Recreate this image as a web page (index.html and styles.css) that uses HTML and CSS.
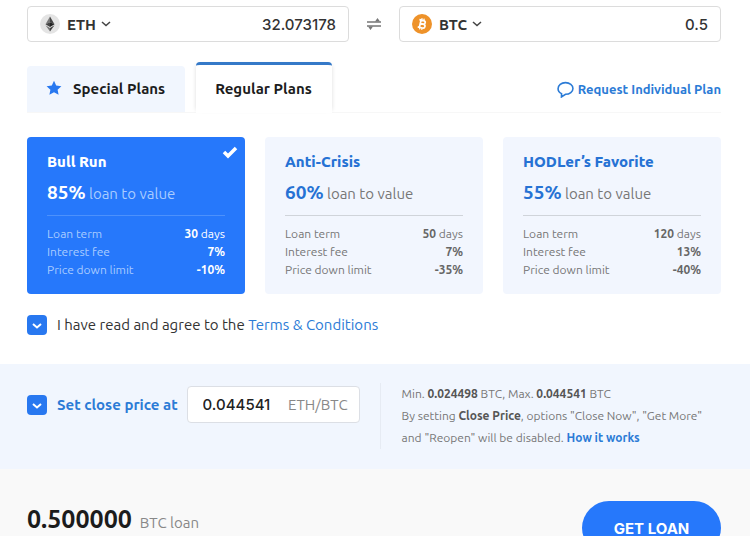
FILE: index.html
```html
<!DOCTYPE html>
<html lang="en">
<head>
    <meta charset="UTF-8">
    <meta name="viewport" content="width=device-width, initial-scale=1">
    <title>Get Loan</title>
    <link rel="stylesheet" href="styles.css">
</head>
<body>
    <form class="loan">
        <div class="amounts">
            <div class="field">
                <svg class="coin" viewBox="0 0 20 20" aria-hidden="true">
                    <circle cx="10" cy="10" r="10" fill="#e4e4e4"/>
                    <path d="M10 2.5 5.5 10.2 10 8.2z" fill="#777"/>
                    <path d="M10 2.5 14.5 10.2 10 8.2z" fill="#444"/>
                    <path d="M5.5 10.2 10 8.2v4.7z" fill="#444"/>
                    <path d="M14.5 10.2 10 8.2v4.7z" fill="#222"/>
                    <path d="M5.5 11.3 10 14v3.6z" fill="#777"/>
                    <path d="M14.5 11.3 10 14v3.6z" fill="#444"/>
                </svg>
                <select class="currency" aria-label="Collateral currency">
                    <option>ETH</option>
                </select>
                <svg class="chevron" viewBox="0 0 10 6" aria-hidden="true"><path d="M1 1l4 3.6L9 1" stroke-width="1.5"/></svg>
                <input class="amount" type="text" value="32.073178" aria-label="Collateral amount">
            </div>
            <svg class="swap" viewBox="0 0 16 12" aria-hidden="true">
                <path d="M1 4h14M1 8h14" fill="none" stroke="#777" stroke-width="1.6"/>
                <path d="M9 3.6 11.500 0 14 3.600zM2 8.400 4.500 12 7 8.400z" fill="#777"/>
            </svg>
            <div class="field">
                <svg class="coin" viewBox="0 0 20 20" aria-hidden="true">
                    <circle cx="10" cy="10" r="10" fill="#ee9229"/>
                    <g transform="rotate(13 10 10)" fill="none" stroke="#fff" stroke-width="1.7">
                        <path d="M6.5 6.3h4.3c2.7 0 2.7 3.6 0 3.6H8h3.2c3 0 3 3.9 0 3.9H6.5M8.2 6.3v7.5"/>
                        <path d="M8.8 4.3v2M11 4.3v2M8.8 13.8v2M11 13.8v2" stroke-width="1.2"/>
                    </g>
                </svg>
                <select class="currency" aria-label="Loan currency">
                    <option>BTC</option>
                </select>
                <svg class="chevron" viewBox="0 0 10 6" aria-hidden="true"><path d="M1 1l4 3.6L9 1" stroke-width="1.5"/></svg>
                <input class="amount" type="text" value="0.5" aria-label="Loan amount">
            </div>
        </div>

        <div class="tabs">
            <button class="tab" type="button">
                <svg class="star" viewBox="0 0 16 16" aria-hidden="true"><path d="m8 .8 2.2 4.7 5.2.7-3.8 3.5 1 5.1L8 12.3l-4.6 2.5 1-5.1L.6 6.2l5.2-.7z"/></svg>
                Special Plans
            </button>
            <button class="tab active" type="button">Regular Plans</button>
            <a class="request" href="#">
                <svg class="bubble" viewBox="0 0 16 16" aria-hidden="true"><path d="M4.300 11.900C2.300 11 1 9.300 1 7.300 1 4 4 1.500 8 1.500s7 2.500 7 5.500-3 5.500-7 5.500L4.200 15z" stroke-width="1.5"/></svg>
                Request Individual Plan
            </a>
        </div>

        <div class="plans">
            <label class="plan">
                <input class="plan-radio" type="radio" name="plan" checked>
                <svg class="tick" viewBox="0 0 16 14" aria-hidden="true"><path d="m2 7 4 4 8-8" stroke-width="3.5"/></svg>
                <span class="plan-name">Bull Run</span>
                <span class="ltv"><b>85%</b> loan to value</span>
                <span class="row">Loan term <span class="value"><b>30</b> days</span></span>
                <span class="row">Interest fee <b class="value">7%</b></span>
                <span class="row">Price down limit <b class="value">-10%</b></span>
            </label>
            <label class="plan">
                <input class="plan-radio" type="radio" name="plan">
                <span class="plan-name">Anti-Crisis</span>
                <span class="ltv"><b>60%</b> loan to value</span>
                <span class="row">Loan term <span class="value"><b>50</b> days</span></span>
                <span class="row">Interest fee <b class="value">7%</b></span>
                <span class="row">Price down limit <b class="value">-35%</b></span>
            </label>
            <label class="plan">
                <input class="plan-radio" type="radio" name="plan">
                <span class="plan-name">HODLer’s Favorite</span>
                <span class="ltv"><b>55%</b> loan to value</span>
                <span class="row">Loan term <span class="value"><b>120</b> days</span></span>
                <span class="row">Interest fee <b class="value">13%</b></span>
                <span class="row">Price down limit <b class="value">-40%</b></span>
            </label>
        </div>

        <div class="terms">
            <span class="check">
                <input type="checkbox" id="agree" checked>
                <svg viewBox="0 0 20 20" aria-hidden="true"><path d="m6 9 4 3.500L14 9"/></svg>
            </span>
            <span><label for="agree">I have read and agree to the</label> <a href="#">Terms &amp; Conditions</a></span>
        </div>

        <div class="close-price">
            <div class="close-set">
                <span class="check">
                    <input type="checkbox" id="close" checked>
                    <svg viewBox="0 0 20 20" aria-hidden="true"><path d="m6 9 4 3.500L14 9"/></svg>
                </span>
                <label class="close-label" for="close">Set close price at</label>
                <div class="price">
                    <input class="price-input" type="text" id="price" value="0.044541" aria-label="Close price">
                    <label for="price">ETH/BTC</label>
                </div>
            </div>
            <div class="hint">
                Min. <b>0.024498</b> BTC, Max. <b>0.044541</b> BTC<br>
                By setting <b>Close Price</b>, options "Close Now", "Get More"<br>
                and "Reopen" will be disabled. <a href="#">How it works</a>
            </div>
        </div>

        <div class="footer">
            <div class="total"><b>0.500000</b>BTC loan</div>
            <button class="submit" type="submit">GET LOAN</button>
        </div>
    </form>
</body>
</html>
```
FILE: styles.css
```css
* {
    box-sizing: border-box;
}
body {
    margin: 0;
    background-color: #fff;
    color: #333;
    font-family: Ubuntu, "Noto Sans", sans-serif;
    font-size: 15px;
}
input, select, button {
    font-family: inherit;
    color: inherit;
    padding: 0;
    border: none;
    background: none;
}
a {
    color: #2b7bd6;
    text-decoration: none;
}
.amounts {
    display: flex;
    align-items: center;
    padding: 6px 29px 0 27px;
}
.field {
    display: flex;
    align-items: center;
    flex: 1;
    min-width: 0;
    height: 36px;
    padding: 0 12px;
    border: 1px solid #dcdcdc;
    border-radius: 4px;
}
.coin {
    width: 20px;
    height: 20px;
    margin-right: 7px;
}
.currency {
    appearance: none;
    font-size: 15px;
    font-weight: 600;
}
.chevron {
    width: 10px;
    height: 6px;
    margin-left: 5px;
    fill: none;
    stroke: #444;
}
.amount {
    flex: 1;
    min-width: 0;
    font-family: Inter, sans-serif;
    font-size: 15px;
    font-weight: 500;
    text-align: right;
}
.swap {
    flex: none;
    width: 16px;
    height: 12px;
    margin: 0 17px;
}
.tabs {
    display: flex;
    align-items: flex-end;
    margin: 20px 29px 0 27px;
    border-bottom: 1px solid #f7f7f7;
}
.tab {
    display: flex;
    align-items: center;
    height: 46px;
    margin-right: 11px;
    padding: 0 20px 2px 19px;
    border-radius: 4px 4px 0 0;
    background-color: #f1f6fe;
    color: #1c1c1c;
    font-size: 15px;
    font-weight: 700;
}
.tab.active {
    height: 51px;
    margin-bottom: -1px;
    border-top: 3px solid #3579c8;
    background-color: #fff;
    box-shadow: 3px 0 4px -3px #ddd, -3px 0 4px -3px #ddd;
}
.star {
    width: 16px;
    height: 16px;
    margin-right: 11px;
    fill: #2878f0;
}
.request {
    display: flex;
    align-items: center;
    height: 46px;
    margin-left: auto;
    font-size: 13px;
    font-weight: 600;
}
.bubble {
    width: 17px;
    height: 17px;
    margin-right: 4px;
    fill: none;
    stroke: #2b7bd6;
}
.plans {
    display: grid;
    grid-template-columns: repeat(3, 1fr);
    gap: 20px;
    padding: 24px 29px 0 27px;
}
.plan {
    position: relative;
    padding: 14px 20px 15px;
    border-radius: 4px;
    background-color: #f2f6fe;
    color: #777;
    cursor: pointer;
}
.plan-radio {
    appearance: none;
    position: absolute;
    margin: 0;
}
.plan-name {
    display: block;
    color: #2672d4;
    font-size: 15px;
    font-weight: 800;
    line-height: 22px;
}
.ltv {
    display: block;
    margin: 6px 0 9px;
    padding-bottom: 8px;
    border-bottom: 1px solid #d0d4da;
    font-size: 15px;
    line-height: 26px;
}
.ltv b {
    color: #2672d4;
    font-size: 19px;
}
.row {
    display: flex;
    justify-content: space-between;
    font-size: 12px;
    line-height: 18px;
}
.value b, b.value {
    color: #666;
}
.plan:has(:checked) {
    background-color: #2678fb;
    color: #a9ccff;
}
.plan:has(:checked) .plan-name,
.plan:has(:checked) .value,
.plan:has(:checked) b {
    color: #fff;
}
.plan:has(:checked) .ltv {
    border-color: #4c91fc;
}
.tick {
    position: absolute;
    top: 8px;
    right: 7px;
    width: 16px;
    height: 14px;
    fill: none;
    stroke: #fff;
}
.check {
    position: relative;
    display: block;
    width: 20px;
    height: 20px;
    margin-right: 10px;
}
.check input {
    appearance: none;
    display: block;
    width: 20px;
    height: 20px;
    margin: 0;
    border-radius: 4px;
    background-color: #2878f0;
}
.check svg {
    position: absolute;
    inset: 0;
    fill: none;
    stroke: #fff;
    stroke-width: 2;
    pointer-events: none;
}
.terms {
    display: flex;
    align-items: center;
    padding: 20px 29px 28px 27px;
    line-height: 22px;
}
.close-price {
    display: flex;
    align-items: flex-start;
    padding: 22px 29px 20px 27px;
    background-color: #f1f6fe;
}
.close-set {
    display: flex;
    align-items: center;
}
.close-label {
    color: #2b7bd6;
    font-weight: 600;
}
.price {
    display: flex;
    align-items: center;
    width: 173px;
    height: 37px;
    margin-left: 9px;
    padding: 0 11px 0 15px;
    border: 1px solid #dcdfe5;
    border-radius: 4px;
    background-color: #fff;
    color: #888;
}
.price-input {
    flex: 1;
    min-width: 0;
    color: #222;
    font-family: Inter, sans-serif;
    font-size: 15px;
    font-weight: 500;
}
.hint {
    margin-top: -3px;
    margin-left: 20px;
    padding-left: 21px;
    border-left: 1px solid #e6ebf3;
    color: #777;
    font-size: 12px;
    line-height: 22px;
}
.hint b {
    color: #555;
}
.hint a {
    font-weight: 700;
}
.footer {
    display: flex;
    align-items: flex-start;
    justify-content: space-between;
    padding: 32px 29px 32px 27px;
    background-color: #f9f9f9;
}
.total {
    color: #888;
    line-height: 36px;
}
.total b {
    margin-right: 8px;
    color: #1c1c1c;
    font-size: 25px;
}
.submit {
    width: 139px;
    height: 54px;
    border-radius: 27px;
    background-color: #2678fb;
    color: #fff;
    font-family: Inter, sans-serif;
    font-size: 15px;
    font-weight: 700;
}
```
